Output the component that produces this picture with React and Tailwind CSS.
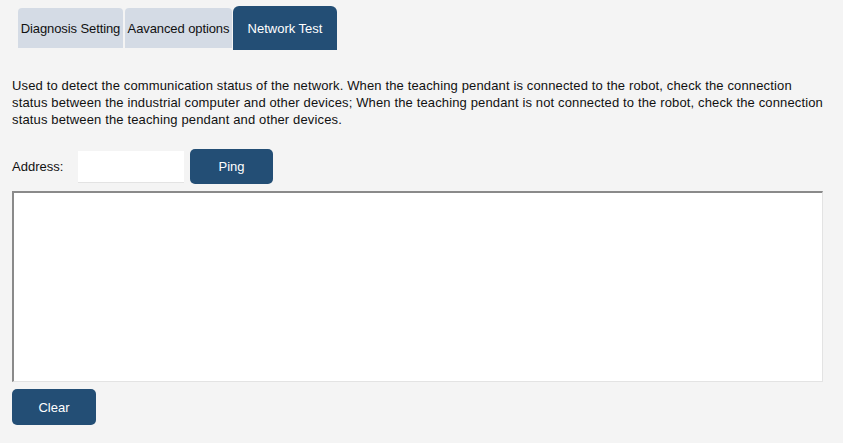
import { useState } from "react";

const tabs = [
  { label: "Diagnosis Setting", w: "w-[105px]" },
  { label: "Aavanced options", w: "w-[107px] ml-[1px]" },
  { label: "Network Test", w: "w-[104px]" },
];

export default function App() {
  const [active, setActive] = useState(2);
  const [address, setAddress] = useState("");
  const [log, setLog] = useState("");

  return (
    <div
      className="w-[843px] h-[443px] bg-[#f4f4f4] text-[13px] text-[#111] overflow-hidden"
      style={{ fontFamily: '"Liberation Sans", Arial, sans-serif' }}
    >
      {/* Tabs */}
      <div className="flex items-end gap-[1px] pl-[18px] pt-[6px] h-[50px]">
        {tabs.map((t, i) =>
          i === active ? (
            <button
              key={t.label}
              onClick={() => setActive(i)}
              className={`${t.w} h-[44px] pt-[1px] rounded-t-[6px] bg-[#234e75] text-white whitespace-nowrap`}
            >
              {t.label}
            </button>
          ) : (
            <button
              key={t.label}
              onClick={() => setActive(i)}
              className={`${t.w} h-[40px] mb-[2px] pt-[1px] rounded-t-[4px] bg-[#d4dbe5] text-[#111] whitespace-nowrap tracking-[-0.1px]`}
            >
              {t.label}
            </button>
          )
        )}
      </div>

      {/* Description */}
      <p className="px-[12px] pt-[27px] leading-[17px] tracking-[0.14px]">
        Used to detect the communication status of the network. When the teaching pendant is connected to the robot, check the connection status between the industrial computer and other devices; When the teaching pendant is not connected to the robot, check the connection status between the teaching pendant and other devices.
      </p>

      {/* Address row */}
      <div className="flex items-center px-[12px] mt-[21px] h-[35px]">
        <span className="w-[66px] pt-[1px]">Address:</span>
        <input
          value={address}
          onChange={(e) => setAddress(e.target.value)}
          className="w-[106px] h-[32px] bg-white border-b border-[#e3e3e3] outline-none px-1"
        />
        <button
          onClick={() => setLog((l) => l + `Ping ${address}\n`)}
          className="ml-[6px] w-[83px] h-[35px] pt-[1px] rounded-[5px] bg-[#234e75] text-white"
        >
          Ping
        </button>
      </div>

      {/* Output */}
      <div className="mx-[12px] mt-[7px] w-[811px] h-[191px] bg-white border-t-2 border-l-2 border-t-[#8a8a8a] border-l-[#8a8a8a] border-r border-b border-r-[#e3e3e3] border-b-[#e3e3e3] whitespace-pre p-1">
        {log}
      </div>

      <div className="px-[12px] mt-[7px]">
        <button
          onClick={() => setLog("")}
          className="w-[84px] h-[36px] pt-[1px] rounded-[5px] bg-[#234e75] text-white"
        >
          Clear
        </button>
      </div>
    </div>
  );
}
